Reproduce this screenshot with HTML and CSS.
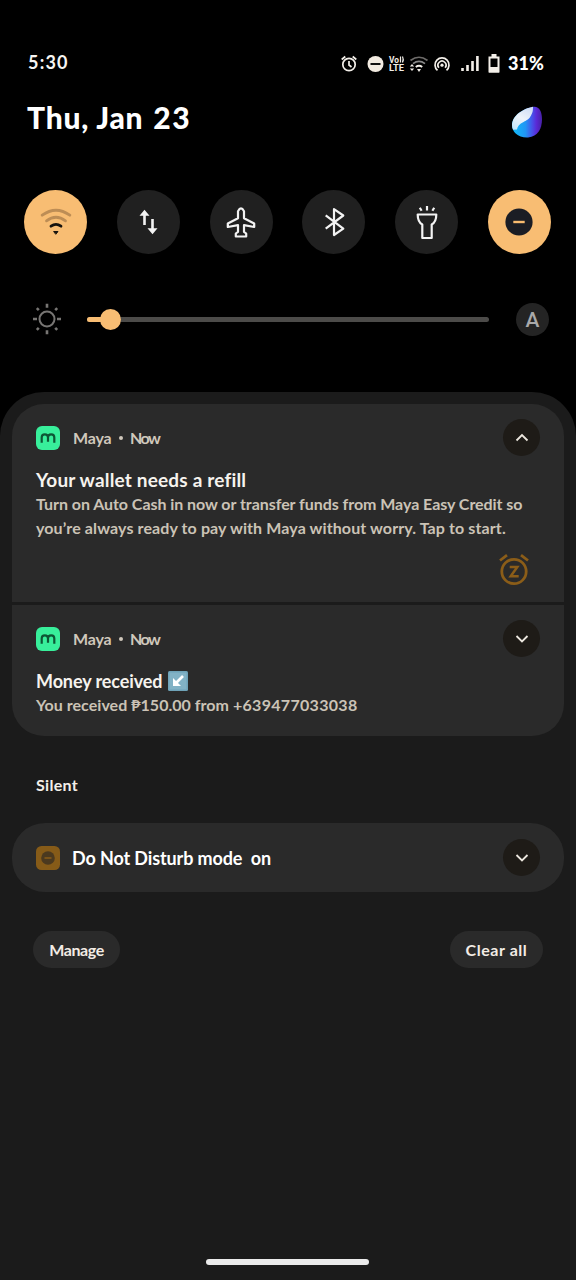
FILE: index.html
```html
<!DOCTYPE html>
<html lang="en">
<head>
<meta charset="utf-8">
<title>Notifications</title>
<link rel="stylesheet" href="styles.css">
</head>
<body>
<main class="screen">
  <header class="status">
    <span class="clock">5:30</span>
    <svg class="status-icons" width="162" height="24" viewBox="340 52 162 24" fill="none" stroke="#f3efe9" stroke-width="1.7">
      <circle cx="349" cy="64.500" r="6.200"/><path d="M349 61v4l2.500 2M341.700 59.500l3.600-3M356.300 59.500l-3.600-3"/>
      <circle cx="375.500" cy="64" r="8" fill="#f3ece2" stroke="none"/><path d="M370.500 64h10" stroke="#111" stroke-width="2"/>
      <g fill="#f3efe9" stroke="none" font-family="Roboto" font-weight="700" font-size="8.500"><text x="389" y="62.500" textLength="10" lengthAdjust="spacingAndGlyphs">Vo</text><text x="389" y="71.300" textLength="15" lengthAdjust="spacingAndGlyphs" font-size="9">LTE</text></g>
      <path d="M400.500 56.500v6M402.500 56.500q1.500 3 0 6" stroke-width="1.200"/>
      <path d="M410.500 60.500q8.500-6.500 17 0" stroke="#6d6b69"/><path d="M413 63.600q6-4.400 12 0" stroke="#888"/><path d="M415.800 67q3.200-2.500 6.400 0" stroke-width="2"/>
      <path d="M417 69h4l-2 3zM409.800 66.500l2.200-2.500 2.200 2.500zM409.800 68.500l2.200 2.500 2.200-2.500z" fill="#f3efe9" stroke="none"/>
      <path d="M437.500 70.300a7 7 0 1 1 9 0M438.900 67.700a4 4 0 1 1 6.200 0"/><circle cx="442" cy="65.200" r="1.600" fill="#f3efe9" stroke="none"/>
      <path d="M462.500 71v-3M467.500 71v-6M472.500 71v-10M477.400 71v-15" stroke-width="2.600"/>
      <path d="M489.500 57.500h9v14h-9z" stroke-width="2"/><path d="M491.500 54h5v3h-5zM489 67h10v5.500h-10z" fill="#f3efe9" stroke="none"/>
    </svg>
    <span class="percent">31%</span>
  </header>

  <section class="date-row">
    <h1 class="date">Thu, Jan <span class="day">23</span></h1>
    <svg class="orb" width="32" height="34" viewBox="0 0 32 34">
      <defs>
        <linearGradient id="violet" x1="0" y1="0" x2="1" y2="0"><stop offset=".15" stop-color="#14b4f8"/><stop offset=".45" stop-color="#2196f5"/><stop offset=".68" stop-color="#4a4be8"/><stop offset=".8" stop-color="#5a28d4"/><stop offset="1" stop-color="#43209c"/></linearGradient>
        <linearGradient id="frost" x1=".8" y1="0" x2=".2" y2="1"><stop offset="0" stop-color="#cfdcf4"/><stop offset=".5" stop-color="#edf3fa"/><stop offset="1" stop-color="#c4e6fa"/></linearGradient>
        <clipPath id="blob"><path d="M22 .8C28-.2 31 5 31 13.500c0 9-4 17-14 18C7 32 1 26 1 19 1 10 12 2.500 22 .8z"/></clipPath>
      </defs>
      <g clip-path="url(#blob)"><path d="M0 0h32v34H0z" fill="url(#violet)"/><path d="M-1 0h23c0 4 0 6-2 9.500-2 4-4 4.500-7.500 6.500-4 2-6 4-6.500 7.500L-1 24z" fill="url(#frost)"/></g>
    </svg>
  </section>

  <section class="tiles">
    <div class="tile on"><svg width="36" height="36" viewBox="-18 -18 36 36" fill="none" stroke="#17130e" stroke-width="2.800" stroke-linecap="round"><path d="M-13.800-6.800q13.800-10 27.600 0" stroke="#bd8d55"/><path d="M-9.500-1.200q9.500-7 19 0" stroke="#bd8d55"/><path d="M-5 4.200q5-3.600 10 0"/><path d="M-2 9.500h4L0 12z" fill="#17130e" stroke-width="1"/></svg></div>
    <div class="tile"><svg width="36" height="36" viewBox="-18 -18 36 36" fill="#f3f3f3"><path d="M-3.500-12.200l5 6h-3.700V3h-2.600v-9.200h-3.700zM4.500 12.200l-5-6h3.700V-3h2.600v9.200h3.700z"/></svg></div>
    <div class="tile"><svg width="36" height="36" viewBox="-18 -18 36 36" fill="none" stroke="#f3f3f3" stroke-width="2.200" stroke-linejoin="round"><path d="M-3-10.800q3-5.500 6 0v7L13.200 1.500V5L3 3.200v6.600l2.200 1.700v3H-5.200v-3L-3 9.800V3.200L-13.200 5V1.500L-3-3.800z"/></svg></div>
    <div class="tile"><svg width="36" height="36" viewBox="-18 -18 36 36" fill="none" stroke="#f3f3f3" stroke-width="2.200" stroke-linejoin="round"><path d="M-8.300-6.700L9.300 6.700 0 13V-12.800l9.300 6.300L-8.300 6.700"/></svg></div>
    <div class="tile"><svg width="36" height="38" viewBox="-18 -19 36 38" fill="none" stroke="#f3f3f3" stroke-width="2.200" stroke-linejoin="round"><path d="M-9.300-7.500H9.300Q9.300 0 4.700 2.500V16h-9.400V2.500Q-9.300 0-9.300-7.500zM0-16v4.500M-7.200-14.300l1.800 3M7.200-14.300l-1.800 3"/></svg></div>
    <div class="tile on"><svg width="36" height="36" viewBox="-18 -18 36 36"><circle r="13.600" fill="#1b1d24"/><path d="M-5.700 0H5.700" stroke="#f8bb6f" stroke-width="2.400"/></svg></div>
  </section>

  <section class="brightness">
    <svg class="sun" width="32" height="32" viewBox="-16 -16 32 32" fill="none" stroke="#777573" stroke-width="2"><circle r="7.500"/><path d="M0-15.300v4M0 11.300v4M-14 0h4M10 0h4M-10.200-10.800l2 2M10.200-10.800l-2 2M-10.200 10.800l2-2M10.200 10.800l-2-2" stroke-width="2.600"/></svg>
    <div class="track"><div class="fill"></div><div class="thumb"></div></div>
    <div class="auto">A</div>
  </section>

  <section class="panel">
    <article class="card first">
      <div class="card-head">
        <svg class="app" width="24" height="24" viewBox="0 0 24 24"><rect width="24" height="24" rx="6" fill="#38ef9b"/><path d="M5.700 16.800v-5.300q0-3.200 3.100-3.200 3.200 0 3.200 3.200v4.300M12 11.500q0-3.200 3.200-3.200 3.100 0 3.100 3.200v5.300" fill="none" stroke="#0d5635" stroke-width="2.200"/></svg>
        <span class="app-name">Maya</span><span class="dot"></span><span class="when">Now</span>
        <div class="expand"><svg width="14" height="10" viewBox="0 0 14 10"><path d="M1.500 7.500L7 2l5.500 5.500"/></svg></div>
      </div>
      <h2 class="title wallet">Your wallet needs a refill</h2>
      <p class="body"><span class="line1">Turn on Auto Cash in now or transfer funds from Maya Easy Credit so</span><br><span class="line2">you’re always ready to pay with Maya without worry. Tap to start.</span></p>
      <svg class="snooze" width="32" height="32" viewBox="-16 -16 32 32" fill="none" stroke="#8b5d18" stroke-width="2.800"><circle cy="1.500" r="12.200"/><path d="M-14-9.500l7-5.300M14-9.500l-7-5.300"/><path d="M-4.300-3H3.300L-3.300 6.200h8" stroke-width="2.500"/></svg>
    </article>
    <article class="card second">
      <div class="card-head">
        <svg class="app" width="24" height="24" viewBox="0 0 24 24"><rect width="24" height="24" rx="6" fill="#38ef9b"/><path d="M5.700 16.800v-5.300q0-3.200 3.100-3.200 3.200 0 3.200 3.200v4.300M12 11.500q0-3.200 3.200-3.200 3.100 0 3.100 3.200v5.300" fill="none" stroke="#0d5635" stroke-width="2.200"/></svg>
        <span class="app-name">Maya</span><span class="dot"></span><span class="when">Now</span>
        <div class="expand"><svg width="14" height="10" viewBox="0 0 14 10"><path d="M1.500 2L7 7.500 12.500 2"/></svg></div>
      </div>
      <h2 class="title money"><span>Money received</span><svg width="20" height="20" viewBox="0 0 20 20"><rect width="20" height="20" rx="1.500" fill="#6fa3b8"/><rect x="1.500" y="1.500" width="17" height="17" fill="#82b2c5"/><path d="M15 5L8 12" stroke="#fff" stroke-width="2.600"/><path d="M5 7v8h8z" fill="#fff"/></svg></h2>
      <p class="body"><span class="line3">You received ₱150.00 from </span><span class="phone">+639477033038</span></p>
    </article>

    <h3 class="silent">Silent</h3>

    <article class="card dnd">
      <svg class="app" width="24" height="24" viewBox="0 0 24 24"><rect width="24" height="24" rx="5.500" fill="#865b18"/><circle cx="12" cy="12" r="6.800" fill="#4b391f"/><path d="M8.500 12h7" stroke="#865b18" stroke-width="1.600"/></svg>
      <span class="dnd-text">Do Not Disturb mode&nbsp; on</span>
      <div class="expand"><svg width="14" height="10" viewBox="0 0 14 10"><path d="M1.500 2L7 7.500 12.500 2"/></svg></div>
    </article>

    <footer class="actions">
      <button class="pill manage">Manage</button>
      <button class="pill clear">Clear all</button>
    </footer>
    <div class="home-bar"></div>
  </section>
</main>
</body>
</html>
```
FILE: styles.css
```css
* { box-sizing: border-box; }
body { margin: 0; background: #000; font-family: Lato, "Open Sans", sans-serif; font-weight: 700; color: #fff; }
h1, h2, h3, p { margin: 0; font-weight: 700; white-space: nowrap; }
svg { display: block; flex: none; }
.screen { width: 576px; height: 1280px; display: flex; flex-direction: column; overflow: hidden; background: #000; }
.status { height: 76px; padding: 52px 0 0 28px; display: flex; align-items: flex-start; line-height: 20px; }
.clock { flex: none; font-size: 18px; letter-spacing: 1.2px; width: 312px; color: #f7f5f2; }
.percent { font-size: 18px; line-height: 22px; margin-left: 6px; letter-spacing: 0; font-weight: 900; }
.date-row { height: 66px; padding: 21px 33px 0 27px; display: flex; justify-content: space-between; }
.date { font-size: 30px; line-height: 40px; font-weight: 900; letter-spacing: .8px; }
.day { letter-spacing: 1.5px; margin-left: 2px; }
.orb { margin-top: 9px; }
.tiles { height: 112px; padding: 48px 25px 0 24px; display: flex; justify-content: space-between; }
.tile { width: 63px; height: 64px; border-radius: 50%; background: #202020; display: flex; align-items: center; justify-content: center; }
.tile.on { background: #f8bd73; }
.brightness { height: 138px; padding: 49px 27px 0 31px; display: flex; align-items: flex-start; }
.track { position: relative; width: 402px; height: 5px; margin: 14px 27px 0 24px; border-radius: 3px; background: #4c4b49; }
.fill { width: 24px; height: 5px; border-radius: 3px; background: #f8bd73; }
.thumb { position: absolute; left: 13px; top: -8px; width: 21px; height: 21px; border-radius: 50%; background: #f8bd73; }
.auto { width: 33px; height: 33px; border-radius: 50%; background: #242424; color: #a9a9a9; font: 500 21px/34px Roboto, sans-serif; text-align: center; }
.panel { flex: 1; background: #1b1b1b; border-radius: 44px 44px 0 0; padding: 12px 12px 0; display: flex; flex-direction: column; }
.card { background: #2a2a2a; }
.first { height: 198px; padding: 15px 24px 0; border-radius: 32px 32px 0 0; display: flex; flex-direction: column; }
.second { height: 131px; margin-top: 3px; padding: 15px 24px 0; border-radius: 0 0 32px 32px; }
.card-head { height: 37px; display: flex; align-items: center; font-size: 16px; line-height: 20px; color: #d0c8bc; }
.app-name { margin-left: 13px; width: 40px; letter-spacing: -.2px; }
.dot { width: 4px; height: 4px; border-radius: 50%; background: #d0c8bc; margin: 0 7px 0 6px; }
.when { letter-spacing: -1.6px; }
.expand { width: 37px; height: 37px; margin-left: auto; border-radius: 50%; background: #1e1b17; display: flex; align-items: center; justify-content: center; }
.expand path { fill: none; stroke: #ece7df; stroke-width: 1.8; }
.title { margin-top: 12px; font-size: 18px; line-height: 24px; color: #f6f3ee; }
.body { font-size: 16px; line-height: 24px; color: #cbc3b6; }
.wallet { font-size: 19px; line-height: 23px; margin-bottom: 1px; letter-spacing: .18px; }
.line1 { letter-spacing: -.05px; }
.line2 { letter-spacing: .11px; }
.line3 { letter-spacing: .03px; white-space: pre; }
.phone { letter-spacing: .3px; }
.snooze { margin: 14px 10px 0 auto; }
.money { display: flex; align-items: center; }
.money span { width: 132px; letter-spacing: -.1px; }
.silent { margin: 37px 0 0 24px; font-size: 16px; line-height: 24px; letter-spacing: .3px; color: #f3efe9; }
.dnd { height: 69px; margin-top: 26px; padding: 0 24px; border-radius: 33px; display: flex; align-items: center; }
.dnd-text { margin-left: 12px; font-size: 18px; letter-spacing: -.12px; }
.actions { margin-top: 39px; padding: 0 21px; display: flex; justify-content: space-between; }
.pill { height: 37px; border: 0; padding: 0; border-radius: 19px; background: #2a2a2a; color: #f3ece5; font: 700 16px/36px Lato, sans-serif; }
.manage { width: 87px; letter-spacing: -.4px; }
.clear { width: 93px; letter-spacing: .55px; }
.home-bar { width: 163px; height: 6px; margin: 291px 0 0 194px; border-radius: 3px; background: #ebebeb; }
```
